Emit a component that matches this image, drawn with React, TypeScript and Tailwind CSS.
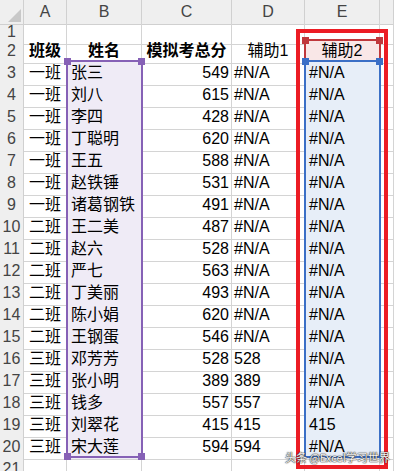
import React from 'react';

// ─── Sheet data ──────────────────────────────────────────────
type Row = [string, string, number, string, string];

const ROWS: Row[] = [
  ['一班', '张三', 549, '#N/A', '#N/A'],
  ['一班', '刘八', 615, '#N/A', '#N/A'],
  ['一班', '李四', 428, '#N/A', '#N/A'],
  ['一班', '丁聪明', 620, '#N/A', '#N/A'],
  ['一班', '王五', 588, '#N/A', '#N/A'],
  ['一班', '赵铁锤', 531, '#N/A', '#N/A'],
  ['一班', '诸葛钢铁', 491, '#N/A', '#N/A'],
  ['二班', '王二美', 487, '#N/A', '#N/A'],
  ['二班', '赵六', 528, '#N/A', '#N/A'],
  ['二班', '严七', 563, '#N/A', '#N/A'],
  ['二班', '丁美丽', 493, '#N/A', '#N/A'],
  ['二班', '陈小娟', 620, '#N/A', '#N/A'],
  ['二班', '王钢蛋', 546, '#N/A', '#N/A'],
  ['三班', '邓芳芳', 528, '528', '#N/A'],
  ['三班', '张小明', 389, '389', '#N/A'],
  ['三班', '钱多', 557, '557', '#N/A'],
  ['三班', '刘翠花', 415, '415', '415'],
  ['三班', '宋大莲', 594, '594', '#N/A'],
];

const COLS = 'grid grid-cols-[24px_43px_75px_90px_73px_75px_14px]';
const cell = 'border-r border-b border-[#d4d4d4] flex items-center overflow-hidden whitespace-nowrap';
const hdr = 'bg-[#efefef] border-r border-b border-[#d0d0d0] flex items-center justify-center text-[#444]';

function Handle({ className }: { className: string }) {
  return <div className={`absolute w-[7px] h-[7px] ${className}`} />;
}

export default function App() {
  return (
    <div
      className="relative w-[394px] h-[471px] overflow-hidden bg-white text-[16px] text-black"
      style={{ fontFamily: '"Liberation Sans", "Noto Sans CJK SC", sans-serif' }}
    >
      {/* column headers */}
      <div className={`${COLS} h-[20px]`}>
        <div className="bg-[#efefef] border-r border-b border-[#d0d0d0] relative">
          <svg className="absolute right-[2px] bottom-[2px]" width="13" height="13" viewBox="0 0 13 13">
            <polygon points="13,0 13,13 0,13" fill="#c8c8c8" />
          </svg>
        </div>
        {['A', 'B', 'C', 'D', 'E', ''].map((c, i) => (
          <div key={i} className={hdr}>{c}</div>
        ))}
      </div>

      {/* row 1 */}
      <div className={`${COLS} h-[19px]`}>
        <div className={hdr}>1</div>
        {[0, 1, 2, 3, 4, 5].map((i) => <div key={i} className={cell} />)}
      </div>

      {/* row 2 — headings */}
      <div className={`${COLS} h-[22px]`}>
        <div className={hdr}>2</div>
        <div className={`${cell} justify-center font-bold`}>班级</div>
        <div className={`${cell} justify-center font-bold`}>姓名</div>
        <div className={`${cell} justify-center font-bold`}>模拟考总分</div>
        <div className={`${cell} justify-center`}>辅助1</div>
        <div className={`${cell} justify-center bg-[#f9e7e7]`}>辅助2</div>
        <div className={cell} />
      </div>

      {ROWS.map((r, i) => (
        <div key={i} className={`${COLS} h-[22px]`}>
          <div className={hdr}>{i + 3}</div>
          <div className={`${cell} justify-center`}>{r[0]}</div>
          <div className={`${cell} pl-[4px] bg-[#efebf6]`}>{r[1]}</div>
          <div className={`${cell} justify-end pr-[2px]`}>{r[2]}</div>
          <div className={`${cell} pl-[2px]`}>{r[3]}</div>
          <div className={`${cell} pl-[4px] bg-[#e7eef8]`}>{r[4]}</div>
          <div className={cell} />
        </div>
      ))}

      {/* row 21 */}
      <div className={`${COLS} h-[22px]`}>
        <div className={hdr}>21</div>
        {[0, 1, 2, 3, 4, 5].map((i) => <div key={i} className={cell} />)}
      </div>

      {/* B3:B20 range outline */}
      <div className="absolute left-[66px] top-[60px] w-[77px] h-[398px] border-2 border-[#8661b6]">
        <Handle className="-left-[4px] -top-[4px] bg-[#8661b6]" />
        <Handle className="-right-[4px] -top-[4px] bg-[#8661b6]" />
        <Handle className="-left-[4px] -bottom-[4px] bg-[#8661b6]" />
        <Handle className="-right-[4px] -bottom-[4px] bg-[#8661b6]" />
      </div>

      {/* E2 range outline */}
      <div className="absolute left-[304px] top-[39px] w-[77px] h-[23px] border-2 border-b-0 border-[#c0383c]">
        <Handle className="-left-[4px] -top-[4px] bg-[#c0383c]" />
        <Handle className="-right-[4px] -top-[4px] bg-[#c0383c]" />
      </div>

      {/* E3:E20 range outline */}
      <div className="absolute left-[304px] top-[60px] w-[77px] h-[398px] border-2 border-[#3b6fc6]">
        <Handle className="-left-[4px] -top-[4px] bg-[#3b6fc6]" />
        <Handle className="-right-[4px] -top-[4px] bg-[#3b6fc6]" />
      </div>

      {/* red annotation frame */}
      <div className="absolute left-[296px] top-[29px] w-[92px] h-[440px] border-[4px] border-[#ec1c24]" />

      {/* watermark */}
      <div
        className="absolute left-[285px] top-[449px] text-[11px] leading-[16px] text-[#f4f4f4] [text-shadow:0_0_1px_#333,0_0_1px_#333,0_0_2px_rgba(0,0,0,0.6)]"
        style={{ fontFamily: '"Noto Sans CJK SC", sans-serif' }}
      >
        头条 @Excel学习世界
      </div>
    </div>
  );
}
